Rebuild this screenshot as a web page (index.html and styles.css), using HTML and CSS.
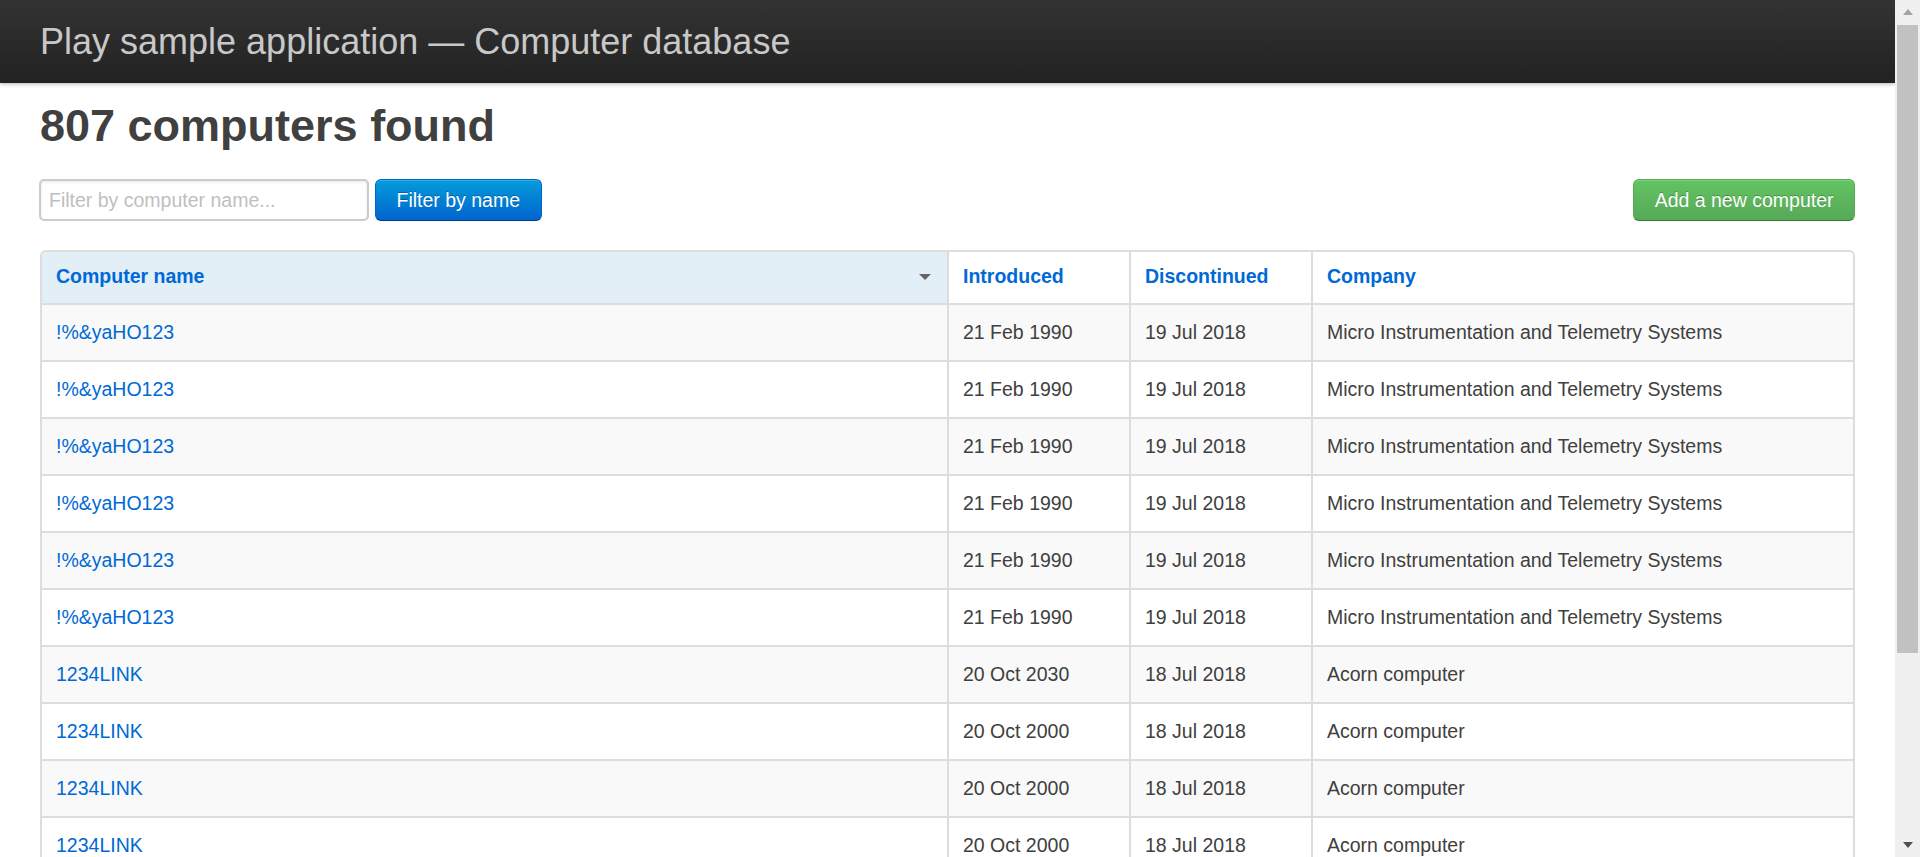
FILE: index.html
```html
<!DOCTYPE html>
<html lang="en">
<head>
<meta charset="utf-8">
<title>Computers database</title>
<link rel="stylesheet" href="styles.css">
</head>
<body>
<div class="window">
  <div class="page">
    <header class="topbar">
      <h1 class="brand"><a href="#">Play sample application — Computer database</a></h1>
    </header>
    <main class="content">
      <h1 class="count">807 computers found</h1>
      <div class="actions">
        <form class="filter" action="#">
          <input class="search" type="search" placeholder="Filter by computer name...">
          <button class="btn primary" type="button">Filter by name</button>
        </form>
        <a class="btn success" href="#">Add a new computer</a>
      </div>
      <table class="computers">
        <colgroup>
          <col class="c-name">
          <col class="c-date">
          <col class="c-date">
          <col>
        </colgroup>
        <thead>
          <tr>
            <th class="sorted"><a href="#">Computer name</a></th>
            <th><a href="#">Introduced</a></th>
            <th><a href="#">Discontinued</a></th>
            <th><a href="#">Company</a></th>
          </tr>
        </thead>
        <tbody>
          <tr><td><a href="#">!%&amp;yaHO123</a></td><td>21 Feb 1990</td><td>19 Jul 2018</td><td>Micro Instrumentation and Telemetry Systems</td></tr>
          <tr><td><a href="#">!%&amp;yaHO123</a></td><td>21 Feb 1990</td><td>19 Jul 2018</td><td>Micro Instrumentation and Telemetry Systems</td></tr>
          <tr><td><a href="#">!%&amp;yaHO123</a></td><td>21 Feb 1990</td><td>19 Jul 2018</td><td>Micro Instrumentation and Telemetry Systems</td></tr>
          <tr><td><a href="#">!%&amp;yaHO123</a></td><td>21 Feb 1990</td><td>19 Jul 2018</td><td>Micro Instrumentation and Telemetry Systems</td></tr>
          <tr><td><a href="#">!%&amp;yaHO123</a></td><td>21 Feb 1990</td><td>19 Jul 2018</td><td>Micro Instrumentation and Telemetry Systems</td></tr>
          <tr><td><a href="#">!%&amp;yaHO123</a></td><td>21 Feb 1990</td><td>19 Jul 2018</td><td>Micro Instrumentation and Telemetry Systems</td></tr>
          <tr><td><a href="#">1234LINK</a></td><td>20 Oct 2030</td><td>18 Jul 2018</td><td>Acorn computer</td></tr>
          <tr><td><a href="#">1234LINK</a></td><td>20 Oct 2000</td><td>18 Jul 2018</td><td>Acorn computer</td></tr>
          <tr><td><a href="#">1234LINK</a></td><td>20 Oct 2000</td><td>18 Jul 2018</td><td>Acorn computer</td></tr>
          <tr><td><a href="#">1234LINK</a></td><td>20 Oct 2000</td><td>18 Jul 2018</td><td>Acorn computer</td></tr>
          <tr><td><a href="#">1234LINK</a></td><td>20 Oct 2000</td><td>18 Jul 2018</td><td>Acorn computer</td></tr>
        </tbody>
      </table>
    </main>
  </div>
  <div class="scrollbar" aria-hidden="true">
    <span class="arrow up"></span>
    <div class="track"><div class="thumb"></div></div>
    <span class="arrow down"></span>
  </div>
</div>
</body>
</html>
```
FILE: styles.css
```css
html, body {
  margin: 0;
  padding: 0;
}
body {
  font-family: "Liberation Sans", Arial, Helvetica, sans-serif;
  font-size: 19.5px;
  line-height: 27px;
  color: #404040;
  background: #fff;
}
a {
  color: #0069d6;
  text-decoration: none;
}
.window {
  display: flex;
  height: 100vh;
  overflow: hidden;
}
.page {
  flex: 1;
  min-width: 0;
  overflow: hidden;
}
.topbar {
  height: 83px;
  padding: 0 40px;
  background: linear-gradient(#333333, #222222);
  box-shadow: 0 1px 4px rgba(0, 0, 0, 0.3);
  position: relative;
  z-index: 1;
}
.brand {
  margin: 0;
  font-size: 36px;
  font-weight: normal;
  line-height: 83px;
}
.brand a {
  color: #c8c8c8;
}
.content {
  padding: 0 40px;
}
.count {
  margin: 16px 0 0;
  font-size: 45px;
  line-height: 54px;
  font-weight: bold;
  color: #404040;
}
.actions {
  display: flex;
  justify-content: space-between;
  align-items: center;
  margin-top: 26px;
}
.filter {
  display: flex;
  gap: 6px;
  margin: 0 0 0 -1px;
}
.search {
  box-sizing: border-box;
  width: 330px;
  height: 42px;
  margin: 0;
  padding: 0 8px;
  font-family: inherit;
  font-size: 19.5px;
  color: #808080;
  border: 2px solid #cccccc;
  border-radius: 5px;
  box-shadow: inset 0 1px 3px rgba(0, 0, 0, 0.1);
  outline: none;
  -webkit-appearance: none;
}
.search::placeholder {
  color: #bfbfbf;
}
.btn {
  box-sizing: border-box;
  display: inline-block;
  height: 42px;
  margin: 0;
  padding: 0 20.5px;
  font-family: inherit;
  font-size: 19.5px;
  line-height: 40px;
  color: #fff;
  border: 1px solid;
  border-radius: 6px;
  text-shadow: 0 -1px 0 rgba(0, 0, 0, 0.25);
  box-shadow: inset 0 1px 0 rgba(255, 255, 255, 0.2), 0 1px 2px rgba(0, 0, 0, 0.05);
  cursor: pointer;
}
.btn.primary {
  background: linear-gradient(#049cdb, #0064cd);
  border-color: #0064cd #0064cd #003f81;
}
.btn.success {
  background: linear-gradient(#62c462, #57a957);
  border-color: #57a957 #57a957 #3d773d;
}
.computers {
  width: 100%;
  margin-top: 29px;
  table-layout: fixed;
  border-collapse: separate;
  border-spacing: 0;
  border: 2px solid #dddddd;
  border-radius: 6px;
}
.c-name {
  width: 905px;
}
.c-date {
  width: 182px;
}
.computers th,
.computers td {
  text-align: left;
  vertical-align: middle;
  white-space: nowrap;
  overflow: hidden;
}
.computers th {
  padding: 11px 16px 13px 14px;
  font-weight: bold;
  line-height: 27px;
}
.computers td {
  padding: 14px 16px 14px 14px;
  line-height: 27px;
  border-top: 2px solid #dddddd;
}
.computers th + th,
.computers td + td {
  border-left: 2px solid #dddddd;
}
.computers th.sorted {
  background: #e2eff6;
  border-top-left-radius: 4px;
}
.computers th.sorted::after {
  content: "";
  float: right;
  margin-top: 11px;
  border-style: solid;
  border-width: 6px 6px 0;
  border-color: #666666 transparent;
}
.computers tbody tr:nth-child(odd) td {
  background: #f9f9f9;
}
.scrollbar {
  width: 25px;
  flex: none;
  display: flex;
  flex-direction: column;
  align-items: center;
  background: #f0f0f0;
}
.arrow {
  display: block;
  width: 0;
  height: 0;
  border-style: solid;
}
.arrow.up {
  margin: 9px 0 10px;
  border-width: 0 5.5px 6px;
  border-color: transparent transparent #a3a3a3;
}
.track {
  flex: 1;
  align-self: stretch;
  padding: 0 2px;
}
.thumb {
  height: 628px;
  background: #c1c1c1;
}
.arrow.down {
  margin: 10px 0 9px;
  border-width: 6px 5.5px 0;
  border-color: #505050 transparent transparent;
}
```
